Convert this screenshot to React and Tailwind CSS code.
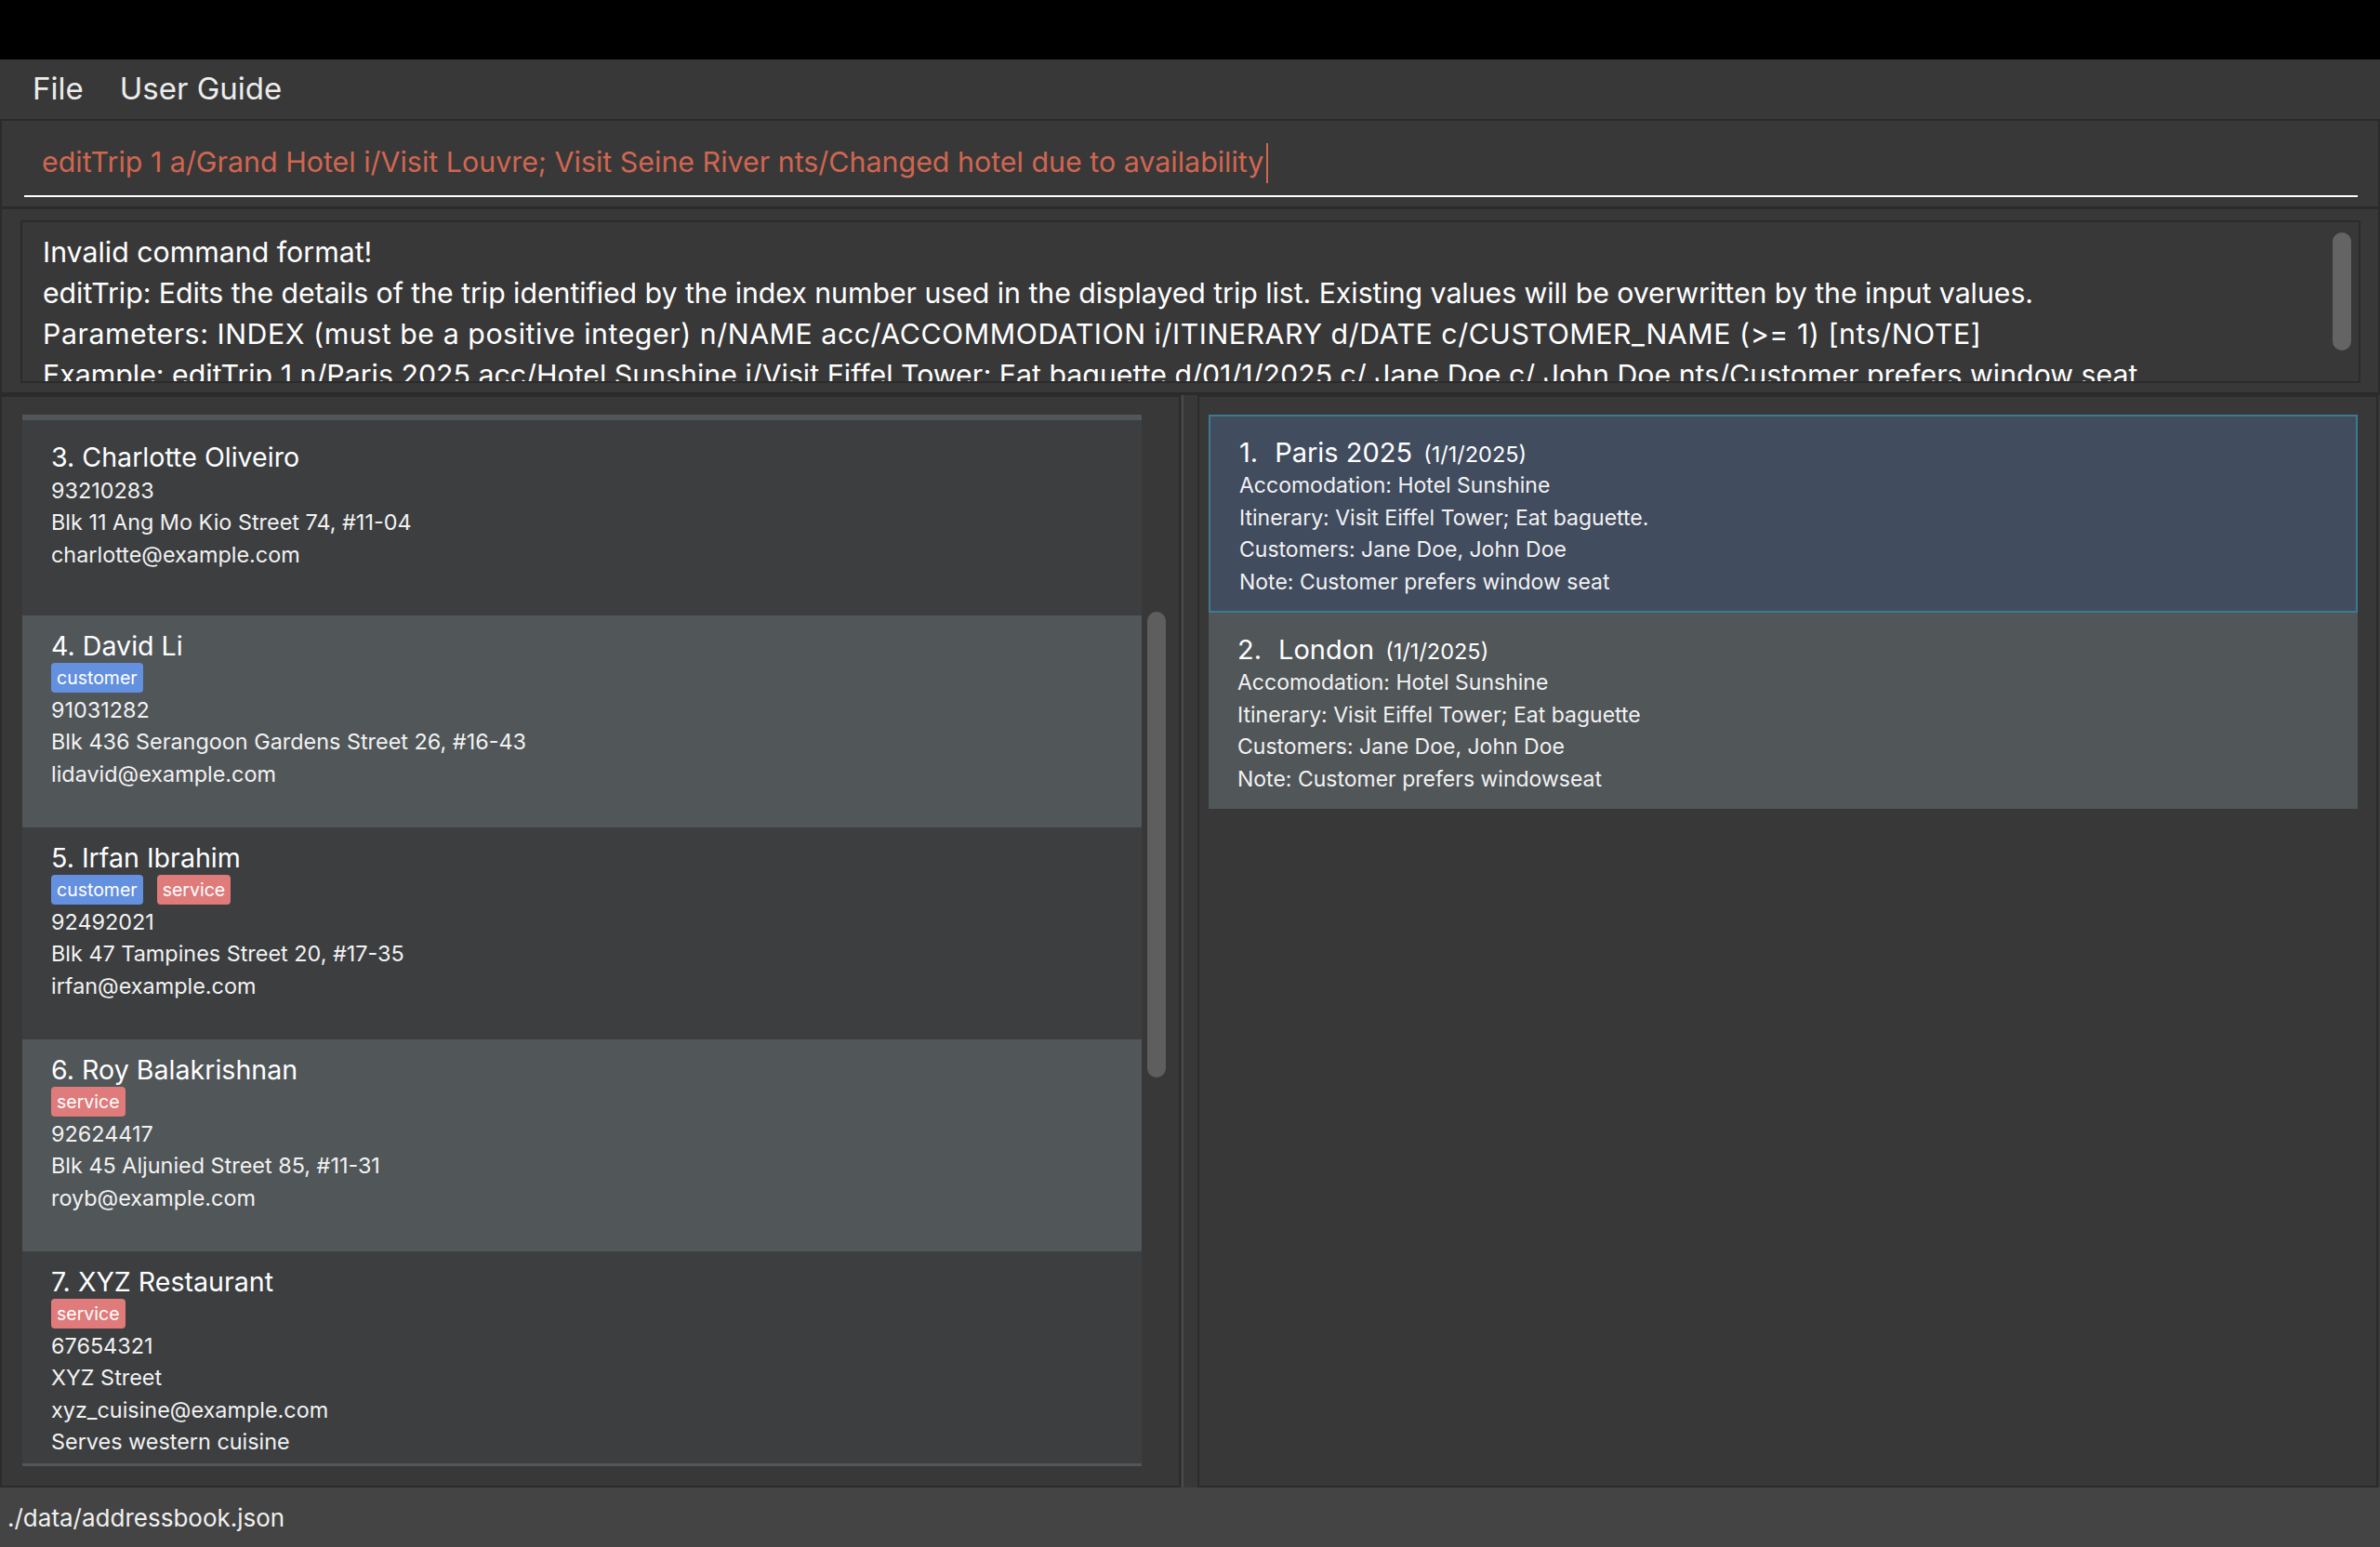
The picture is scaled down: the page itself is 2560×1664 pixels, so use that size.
import React from 'react';

const PEOPLE = [
  {
    id: 3,
    name: 'Charlotte Oliveiro',
    tags: [],
    lines: ['93210283', 'Blk 11 Ang Mo Kio Street 74, #11-04', 'charlotte@example.com'],
  },
  {
    id: 4,
    name: 'David Li',
    tags: ['customer'],
    lines: ['91031282', 'Blk 436 Serangoon Gardens Street 26, #16-43', 'lidavid@example.com'],
  },
  {
    id: 5,
    name: 'Irfan Ibrahim',
    tags: ['customer', 'service'],
    lines: ['92492021', 'Blk 47 Tampines Street 20, #17-35', 'irfan@example.com'],
  },
  {
    id: 6,
    name: 'Roy Balakrishnan',
    tags: ['service'],
    lines: ['92624417', 'Blk 45 Aljunied Street 85, #11-31', 'royb@example.com'],
  },
  {
    id: 7,
    name: 'XYZ Restaurant',
    tags: ['service'],
    lines: ['67654321', 'XYZ Street', 'xyz_cuisine@example.com', 'Serves western cuisine'],
  },
];

const TRIPS = [
  {
    id: 1,
    name: 'Paris 2025',
    date: '(1/1/2025)',
    lines: [
      'Accomodation: Hotel Sunshine',
      'Itinerary: Visit Eiffel Tower; Eat baguette.',
      'Customers: Jane Doe, John Doe',
      'Note: Customer prefers window seat',
    ],
  },
  {
    id: 2,
    name: 'London',
    date: '(1/1/2025)',
    lines: [
      'Accomodation: Hotel Sunshine',
      'Itinerary: Visit Eiffel Tower; Eat baguette',
      'Customers: Jane Doe, John Doe',
      'Note: Customer prefers windowseat',
    ],
  },
];

// tracking per line keeps the line lengths close to the original font
const RESULT = [
  { text: 'Invalid command format!', cls: '' },
  {
    text: 'editTrip: Edits the details of the trip identified by the index number used in the displayed trip list. Existing values will be overwritten by the input values.',
    cls: 'tracking-[-0.05px]',
  },
  {
    text: 'Parameters: INDEX (must be a positive integer) n/NAME acc/ACCOMMODATION i/ITINERARY d/DATE c/CUSTOMER_NAME (>= 1) [nts/NOTE]',
    cls: 'tracking-[0.55px]',
  },
  {
    text: 'Example: editTrip 1 n/Paris 2025 acc/Hotel Sunshine i/Visit Eiffel Tower; Eat baguette  d/01/1/2025 c/ Jane Doe c/ John Doe nts/Customer prefers window seat',
    cls: '',
  },
];

function Tag({ label }) {
  const color = label === 'customer' ? 'bg-[#6490e0]' : 'bg-[#df7b7b]';
  return (
    <span className={`${color} text-white text-[19.5px] leading-[32px] h-[32px] px-[6px] rounded-[4px]`}>
      {label}
    </span>
  );
}

function PersonCard({ person, light, first }) {
  return (
    <div
      className={`${light ? 'bg-[#515659]' : 'bg-[#3c3e40]'} ${
        first ? 'h-[210px] pt-[22px]' : 'h-[228px] pt-[15px]'
      } pl-[31px] shrink-0`}
    >
      <div className="text-[28.6px] leading-[36px] text-white">
        {person.id}. {person.name}
      </div>
      {person.tags.length > 0 ? (
        <div className="flex gap-[15px] h-[32px] mb-[2px]">
          {person.tags.map((t) => (
            <Tag key={t} label={t} />
          ))}
        </div>
      ) : (
        <div className="h-[1px]" />
      )}
      {person.lines.map((l) => (
        <div key={l} className="text-[23.4px] leading-[34.3px] text-[#f2f2f2]">
          {l}
        </div>
      ))}
    </div>
  );
}

function TripCard({ trip, selected }) {
  return (
    <div
      className={`${
        selected
          ? 'bg-[#414c5f] border-2 border-[#3b7b8f] h-[213px] pt-[21px] pl-[31px]'
          : 'bg-[#515659] h-[211px] pt-[22px] pl-[31px]'
      }`}
    >
      <div className="flex items-baseline h-[36px] leading-[36px] text-white">
        <span className="text-[29px]">{trip.id}.</span>
        <span className="text-[29px] ml-[18px]">{trip.name}</span>
        <span className="text-[23.5px] ml-[12px]">{trip.date}</span>
      </div>
      {trip.lines.map((l) => (
        <div key={l} className="text-[23px] leading-[34.5px] text-[#f2f2f2]">
          {l}
        </div>
      ))}
    </div>
  );
}

export default function App() {
  return (
    <div className="w-[2560px] h-[1664px] flex flex-col bg-[#383838] text-white overflow-hidden font-['Inter','Noto_Sans',sans-serif]">
      {/* window top */}
      <div className="h-[64px] bg-black shrink-0" />

      {/* menu */}
      <div className="h-[66px] shrink-0 flex items-center pl-[35px] gap-[39px] border-b-2 border-[#2b2b2b] text-[33px] text-[#ececec]">
        <span>File</span>
        <span>User Guide</span>
      </div>

      {/* command box */}
      <div className="h-[95px] shrink-0 pt-[10px] pl-[24px] pr-[22px] border-x-2 border-b-[3px] border-[#2b2b2b]">
        <div className="h-[72px] flex items-center pl-[19px] border-b-2 border-white">
          <span className="text-[30.4px] text-[#d06651] whitespace-nowrap">
            editTrip 1 a/Grand Hotel i/Visit Louvre; Visit Seine River nts/Changed hotel due to availability
          </span>
          <span className="w-[2px] h-[43px] bg-[#d06651] ml-[3px]" />
        </div>
      </div>

      {/* result display */}
      <div className="h-[200px] shrink-0 pt-[12px] pl-[20px] pr-[19px] border-x-2 border-b-[3px] border-[#2b2b2b]">
        <div className="relative h-[175px] border-2 border-[#2b2b2b] overflow-hidden pt-[10px] pl-[22px]">
          {RESULT.map((l) => (
            <div key={l.text} className={`text-[30.3px] leading-[44px] whitespace-nowrap text-white ${l.cls}`}>
              {l.text}
            </div>
          ))}
          <div className="absolute right-[8px] top-[11px] w-[20px] h-[127px] rounded-[10px] bg-[#646464]" />
        </div>
      </div>

      {/* lists */}
      <div className="flex h-[1175px] shrink-0">
        <div className="w-[1270px] h-full border-2 border-[#2b2b2b] pt-[19px] pl-[22px]">
          <div className="relative h-[1131px] overflow-hidden">
            <div className="flex flex-col w-[1204px]">
              <div className="h-[6px] bg-[#515659] shrink-0" />
              {PEOPLE.map((p, i) => (
                <PersonCard key={p.id} person={p} light={i % 2 === 1} first={i === 0} />
              ))}
              <div className="h-[40px] bg-[#515659] shrink-0" />
            </div>
            <div className="absolute left-[1210px] top-[212px] w-[20px] h-[501px] rounded-[10px] bg-[#5e5e5e]" />
          </div>
        </div>

        <div className="w-[18px] h-full flex pl-[1px]">
          <div className="w-[2px] h-full bg-[#4a4a4a]" />
        </div>

        <div className="w-[1270px] h-full border-2 border-[#2b2b2b] pt-[19px] pl-[10px] pr-[20px]">
          {TRIPS.map((t, i) => (
            <TripCard key={t.id} trip={t} selected={i === 0} />
          ))}
        </div>
      </div>

      {/* status bar */}
      <div className="flex-1 bg-[#444444] flex items-center pl-[8px] text-[26px] text-[#f0f0f0]">
        ./data/addressbook.json
      </div>
    </div>
  );
}
